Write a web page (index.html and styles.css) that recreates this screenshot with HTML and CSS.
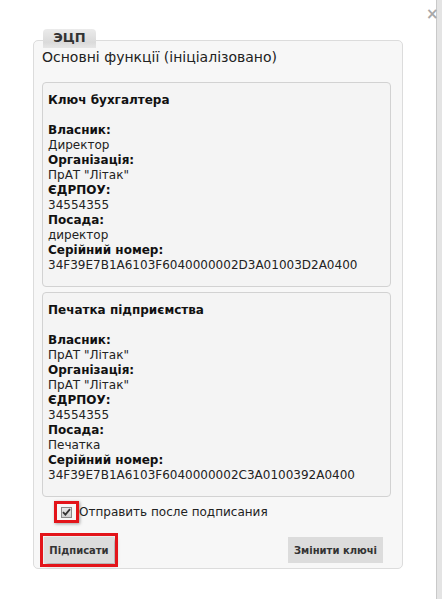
FILE: index.html
```html
<!DOCTYPE html>
<html lang="uk">
<head>
<meta charset="utf-8">
<title>ЭЦП</title>
<link rel="stylesheet" href="styles.css">
</head>
<body>
<div class="modal">
  <span class="close">×</span>
  <div class="tab">ЭЦП</div>
  <div class="panel">
    <div class="title">Основні функції (ініціалізовано)</div>
    <div class="keys">
      <div class="key">
        <b>Ключ бухгалтера</b><br><br>
        <b>Власник:</b><br>Директор<br>
        <b>Організація:</b><br>ПрАТ "Літак"<br>
        <b>ЄДРПОУ:</b><br>34554355<br>
        <b>Посада:</b><br>директор<br>
        <b>Серійний номер:</b><br>34F39E7B1A6103F6040000002D3A01003D2A0400
      </div>
      <div class="key">
        <b>Печатка підприємства</b><br><br>
        <b>Власник:</b><br>ПрАТ "Літак"<br>
        <b>Організація:</b><br>ПрАТ "Літак"<br>
        <b>ЄДРПОУ:</b><br>34554355<br>
        <b>Посада:</b><br>Печатка<br>
        <b>Серійний номер:</b><br>34F39E7B1A6103F6040000002C3A0100392A0400
      </div>
    </div>
    <label class="check-row">
      <span class="mark">
        <span class="cb">
          <svg width="9" height="8" viewBox="0 0 9 8"><path d="M1 4.2 L3.4 6.6 L8 1.2" fill="none" stroke="#333" stroke-width="1.8"/></svg>
        </span>
      </span>
      <span class="check-label">Отправить после подписания</span>
    </label>
    <div class="actions">
      <button class="btn btn-marked">Підписати</button>
      <button class="btn btn-wide">Змінити ключі</button>
    </div>
  </div>
</div>
</body>
</html>
```

FILE: styles.css
```css
html, body {
  margin: 0;
  padding: 0;
}
body {
  width: 442px;
  height: 599px;
  background: #e4e4e4;
  font-family: "DejaVu Sans", Verdana, sans-serif;
  color: #222;
  overflow: hidden;
}
.modal {
  position: relative;
  width: 437px;
  height: 599px;
  box-sizing: border-box;
  background: #fff;
  border-right: 1px solid #c9c9c9;
  padding: 29px 0 0 33px;
}
.close {
  position: absolute;
  top: 7px;
  left: 426px;
  font-size: 15px;
  font-weight: bold;
  color: #a8a8a8;
  line-height: 15px;
}
.tab {
  position: relative;
  z-index: 1;
  width: 53px;
  height: 19px;
  margin-left: 10px;
  box-sizing: border-box;
  background: linear-gradient(#ebebeb, #dadada 70%, #e6e6e6);
  border-radius: 4px 4px 0 0;
  font-size: 13px;
  font-weight: bold;
  line-height: 18px;
  text-align: center;
  color: #333;
}
.panel {
  width: 370px;
  height: 529px;
  box-sizing: border-box;
  margin-top: -8px;
  background: #f7f7f7;
  border: 1px solid #dcdcdc;
  border-radius: 5px;
  padding: 8px 11px 5px 8px;
  display: flex;
  flex-direction: column;
}
.title {
  font-size: 14px;
  line-height: 17px;
  color: #222;
}
.keys {
  margin-top: 16px;
  display: flex;
  flex-direction: column;
  gap: 5px;
}
.key {
  height: 205px;
  box-sizing: border-box;
  background: #f4f4f4;
  border: 1px solid #d2d2d2;
  border-radius: 4px;
  padding: 10px 5px 13px 5px;
  font-size: 12px;
  line-height: 15px;
  color: #222;
}
.key b {
  color: #111;
}
.check-row {
  margin-top: 4px;
  height: 22px;
  display: flex;
  align-items: center;
  padding-left: 12px;
}
.mark {
  width: 25px;
  height: 22px;
  box-sizing: border-box;
  border: 3px solid #e3141a;
  box-shadow: 1px 1px 3px rgba(0, 0, 0, 0.35);
  display: flex;
  align-items: center;
  justify-content: center;
}
.cb {
  width: 11px;
  height: 11px;
  box-sizing: border-box;
  border: 1px solid #8a8a8a;
  background: linear-gradient(#e8e8e8, #cfcfcf);
  display: flex;
  align-items: center;
  justify-content: center;
}
.check-label {
  font-size: 12px;
  color: #222;
}
.actions {
  margin-top: 14px;
  display: flex;
  justify-content: space-between;
  padding: 0 8px 0 2px;
}
.btn {
  height: 26px;
  border: none;
  border-radius: 0;
  background: #dcdcdc;
  font-family: "DejaVu Sans", Verdana, sans-serif;
  font-size: 10px;
  font-weight: bold;
  color: #333;
  padding: 0;
  white-space: nowrap;
}
.btn-marked {
  width: 70px;
  outline: 3px solid #e3141a;
  outline-offset: 1px;
  box-shadow: 2px 2px 4px rgba(0, 0, 0, 0.35);
}
.btn-wide {
  width: 95px;
}
```
